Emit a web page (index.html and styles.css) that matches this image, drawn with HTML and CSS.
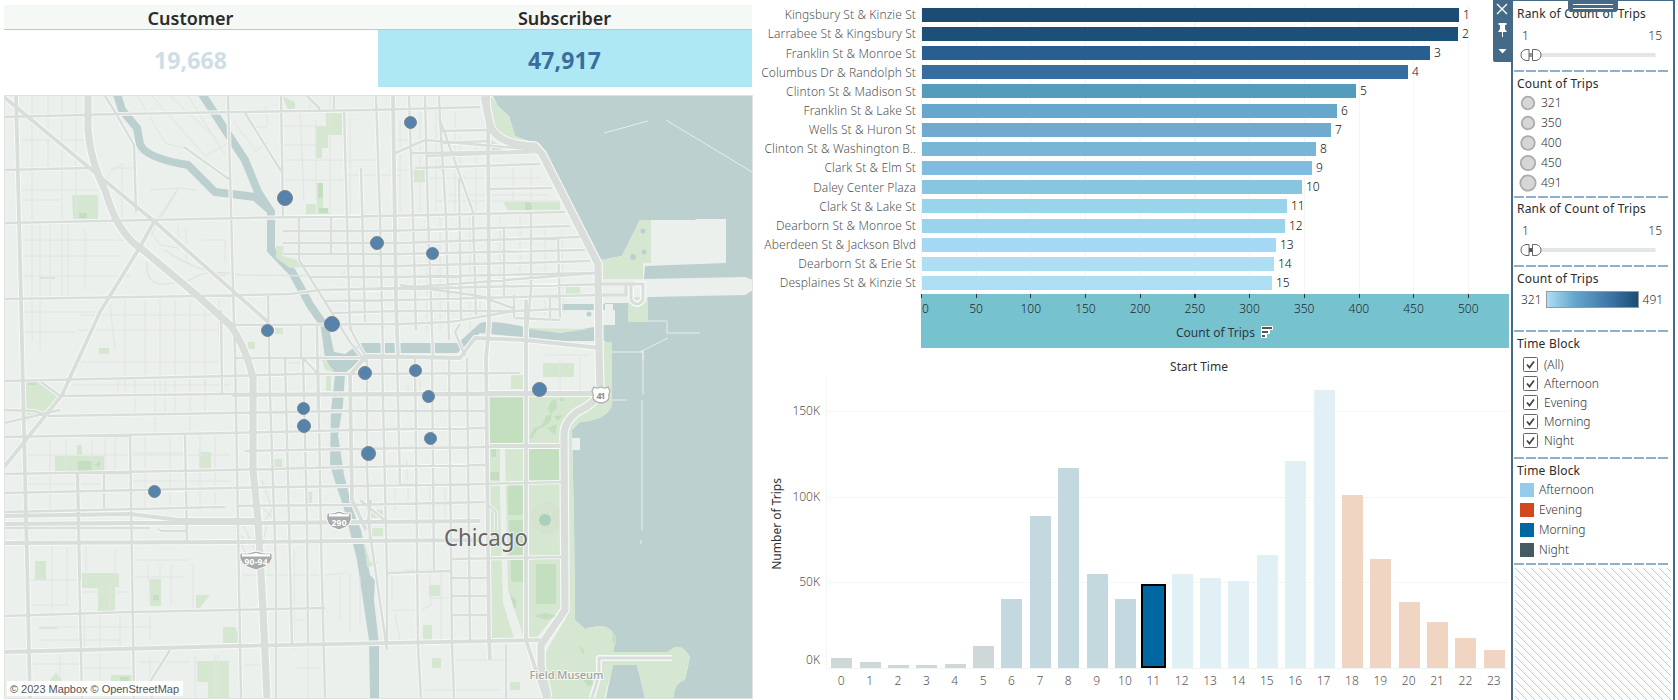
FILE: index.html
```html
<!DOCTYPE html>
<html lang="en">
<head>
<meta charset="utf-8">
<title>Bike trips dashboard</title>
<link rel="stylesheet" href="styles.css">
</head>
<body>
<main class="dashboard">
  <section class="left">
    <div class="kpis">
      <div class="kpi-head">Customer</div><div class="kpi-head">Subscriber</div>
      <div class="kpi muted">19,668</div><div class="kpi active">47,917</div>
    </div>
    <svg class="map" viewBox="4 95 749 604" width="749" height="604">
      <defs>
        <path id="minor" d="M32 96V340M48 96V168M62 96V300M76 96V210M40 225V350M50 225V300M68 225V296M85 230V290M22 140H86M22 190H100M22 200H60M22 240H130M22 256H120M22 276H130M22 312H100M22 332H76M100 190L112 170 122 164V218M110 168H134M150 190L178 188 196 190M178 188L150 230 160 245 178 248M178 226V250M186 228V262M202 240L225 240V262M138 96L165 143 190 150M152 96L205 156 228 143M170 96L218 140M188 96L225 155M250 114L267 108V127H256M233 121L256 151 268 142M284 126H316M300 110L304 200M316 120V200M284 160H345M284 180H345M330 96V216M310 96V112M350 118V216M284 145H318M345 160H378M345 175H400M110 305L115 350M125 300V395M145 298V375M160 298V395M175 298V375M190 300V395M205 300V395M219 300V340M80 315H219M78 330H219M76 362H220M72 385H230M118 376V396M135 377V414M155 376V434M165 377V414M175 376V414M190 377V434M205 378V412M50 440V510M66 440V470M92 440V470M105 438V510M115 438V470M145 437V510M170 436V512M200 435V512M215 434V510M24 455H230M24 484H100M132 453H185M132 481H230M52 545V610M67 548V605M86 546V585M115 550V575M136 560H188M148 565V580M160 565V575M171 565V605M132 577H185M193 563V608M29 580H78M30 605H70M82 592H130M110 580V612M132 625V650M40 627H150M38 640H120M84 615V648M100 615V648M120 615V648M150 610V640M28 664H80M82 668H130M30 682H120M140 662H190M60 655V690M100 654V690M150 658V695M195 655V698M215 655V698M218 655V698M242 575H320M294 550V650M308 640V698M245 665H264M296 620H306M296 668H320M250 355V380M288 363H300M255 395H268M325 575L345 573M340 575V620M350 573V632M360 575V625M392 570V600M405 570H418M392 610H415M395 614L400 640M430 570L431 605 422 610M441 570V640M430 598H450M450 660H510M425 690H500M395 485V510M408 485V505M430 485V520M445 485V520M407 460V480M400 120V212M420 110V212M436 108V212M455 112V212M440 142V170M460 137V212M476 145V212M462 130H486M462 152H488M412 178H540M450 195H548M435 201H560M513 165V201M531 165V205M500 215V280M520 215V280M545 225V275M562 230V300M395 140H412M390 170H420M408 385V395M420 380V392M560 358V390M545 355H590M580 358V390M563 300V312M545 300V315M480 300V315M440 215V330M427 215V330M470 218V330"/>
        <path id="roads" d="M4 117L120 114 370 110 480 107M4 170L88 168M4 223L245 218 380 216 565 212M4 299L200 296 290 294 320 290 440 288 612 284M234 325L400 324 450 322 515 311M4 381L230 376 300 374 350 374 520 373M60 396L230 394 485 393 600 392M48 416L230 413 350 411 485 411M4 437L230 433 350 430 485 428M245 451L350 449 485 447 560 445M4 474L230 470 350 467 485 465M4 493L230 488 350 486 485 484 561 482M4 512L225 507M238 506L350 505 485 502M4 528L150 528M158 529L162 531H187M4 551L4 543 480 540M450 559L561 557M4 616L130 612 235 610 325 608M387 573L450 571M452 578H488M452 596H488M453 615H488M60 410L4 423M4 410L35 411 45 415M40 381L60 396M235 358L350 358 460 357M283 231H380L570 226M283 243H400L580 237M283 254H400L585 250M300 266L400 266 590 261M310 277L400 277 595 273M318 290L400 288 598 273M325 301L400 300 602 295M332 313L400 311 515 311 560 309M415 168L540 164M412 153H427L540 151M393 154L425 140 540 150M440 131L488 130M443 143L488 141M490 189L552 188M427 156L540 152M105 96L115 112 134 145 136 212M228 96L234 325 235 350 241 698M281 96L283 216M245 113L281 171M184 147L230 180M307 96L320 109M334 96V109M344 109L350 330M376 96L380 216 383 358M409 96L413 216 416 330M425 96L428 216 433 358M439 96L440 120 446 216 449 340M440 120L473 212 476 315M459 178L461 320M361 168L365 322M299 218V260L350 342 366 362M331 218V254M351 324V330L366 358M504 228V296M531 214L531 290 525 350M558 238L560 318M268 295L270 395 276 570 276 698M221 310L222 394M301 326V358M317 326L318 410M303 358L318 374M285 358L289 520 292 645M303 358L307 520 308 645M318 358L321 540 325 698M367 358V470L370 540M382 358L387 573V645M397 358L400 485M415 358L418 645 421 698M432 358L434 570M449 358L452 645 454 698M467 358L470 640M77 474L82 698M130 434L134 698M185 433L187 540M104 474V508M78 474L80 580M360 500L387 522M152 698L148 685 170 650M506 645V698M400 285L480 296 515 309M460 324L455 332 465 356M514 295V318M515 318L560 320M550 298V318M371 500L368 520 387 650M488 505L496 512V530"/>
        <path id="wide" d="M16 96L21 300 27 560 30 698M4 97L104 180 155 222 268 322M155 220L140 247 100 312 78 360 62 395 4 467M393 96L396 300 398 358M488 96L489 325 486 358 489 640 490 660M488 393H600M232 395L600 394M4 516L130 514 180 520 258 520M4 524L130 523 260 523 480 521M4 543L240 542 480 540M4 652L235 646 540 640M350 375L352 500 366 530M526 300L526 640 545 698M350 375L366 356 460 358 475 338 525 340 600 348M490 446H560"/>
        <path id="express" d="M88 96L88 130Q90 160 106 193Q118 235 143 250L200 298 230 325Q245 345 253 378V470L258 520 263 610 267 698M484 96L490 125Q497 145 535 146L542 154 598 264 599 350 600 390Q598 402 577 412 564 422 564 435L565 610 541 645 541 665 548 698"/>
      </defs>
      <rect class="land" x="4" y="95" width="749" height="604"/>
      <path class="water" d="M493 96L498 106 509 116 515 136 531 142 541 148 600 260 622 256 640 220 695 220 696 219 726 219V263L645 266 644 279 745 277 753 280 753 290 745 295 648 297 648 322H628V303H605V342H612V405Q607 420 580 422L572 430 574 520 575 620 585 629Q612 620 616 640L613 652H668Q680 640 690 657L685 680Q675 682 673 698H753V96ZM613 665H637L645 698H606ZM562 304H613V310H562Z"/>
      <path class="river" d="M117 94L122 110 137 128 140 144Q145 158 188 165L215 192 255 197 270 210" stroke-width="8"/>
      <path class="river" d="M202 94L224 128 245 160 258 192 271 212V250L292 272 310 305 326 328" stroke-width="8"/>
      <path class="water" d="M321 328H329L334 352 345 354 361 343H458L480 323Q490 320 515 325L560 333 605 325V341L560 341 480 333 457 353H370L345 373 343 405 338 435 344 475 353 510 361 530 367 560 370 575 375 580 374 600 379 645V698H370L369 640 357 560 349 528 343 505 337 488 330 465 331 410 335 376 325 358Z"/>
      <g class="park">
        <path d="M72 195H98V219H73ZM326 113H342V135H328V148H322V158H316V126H326ZM282 96L295 102V109H288ZM412 170H425V182H412ZM491 96L498 106 509 116 515 136 540 147 510 145 493 128 487 110ZM491 140L505 148 492 151ZM503 202H560V210H508ZM600 260L622 256 640 220H651V263H643V279H602ZM628 297H648V322H628ZM566 287H580V294H566ZM306 214H316V204H306ZM276 246H284L282 256 298 260 300 267 290 268 276 258ZM317 183H323V212H329V214H317ZM25 382H40L59 396 45 412 26 421ZM55 456H104V471H55ZM77 445H82V455H77ZM199 452H211V469H199ZM35 561H46V580H35ZM82 573H119V587H115V612H98V588H82ZM149 579H161V606H150ZM196 595H210L200 608H196ZM223 627H235L238 632V643H223ZM197 661H229V698H208V682H197ZM111 675H132V690H111ZM50 680L56 672 62 680V690H50ZM273 459H282V467H273ZM306 492H312V503H306ZM320 354L335 372 325 370ZM326 376H331V391H326ZM364 541L370 562 379 561 374 566 367 567ZM371 510H383V518H371ZM372 528H383V536H372ZM489 397H524V640H490ZM529 397H598L570 425 562 440 562 606 535 640H529ZM600 342H612V405Q607 420 580 422L572 430 574 520 575 620 585 629Q612 620 616 640L613 652H668Q680 640 690 657L685 680Q675 682 673 698H645L637 665H613L604 698H551L544 655 566 618 566 430 575 418 600 398ZM543 363H574V377H543ZM511 375H523V389H511ZM429 585H440V596H429ZM423 625H432V640H423ZM432 658H441V668H432ZM510 682H520V690H510ZM520 328L590 329 560 333ZM39 627H57V629H39ZM39 277H55V279H39ZM99 348H109V354H99ZM248 342H255V349H248ZM275 328H283V334H275Z"/>
      </g>
      <g class="wood">
        <path d="M490 397H523V443H490ZM528 448H559V480H528ZM508 485H524V515H508ZM509 520H524V555H509ZM511 560H524V582H511ZM536 564H556V604H536ZM534 616L545 613 558 616 546 620ZM490 472H499V480H490ZM491 449H496V457H491ZM529 438L534 428 541 426 546 416 552 414 550 422 542 428 537 430 532 439ZM551 401L556 399 557 408 551 414 548 409ZM554 416L563 415 558 421ZM547 428L557 424 555 435ZM560 398H564V401H560ZM78 461H93V471H78ZM94 465L100 461V467ZM79 213H87V218H79ZM318 183H323V198H318ZM319 208H328V213H319ZM525 202H532V210H525ZM492 142L503 150H492ZM511 595L516 600V608H511ZM612 630L616 640 613 645ZM579 645L584 650 583 655ZM583 680L590 677 594 684 588 687ZM28 382H36V385H28ZM153 595H159V600H153ZM120 677H129V683H120Z"/>
      </g>
      <path class="land" d="M500 447H505L508 590 524 638H514L503 603 500 500ZM572 438H580V450H572ZM570 310H615V325H600L560 328Z"/>
      <g class="ponds"><circle cx="643" cy="231" r="2.5"/><circle cx="644" cy="252" r="2.5"/><circle cx="633" cy="257" r="3"/><circle cx="589" cy="314" r="2.5"/></g>
      <circle class="meadow" cx="547" cy="518" r="16"/><circle class="fountain" cx="545" cy="520" r="6"/>
      <path class="break" d="M604 133L648 121M666 120L752 172M648 321H667V333H700M643 350V360M640 352L668 338M612 352H643V395M642 400V530M612 400H627M641 540V544"/>
      <use href="#minor" class="minor"/>
      <path class="minor thick" d="M147 262Q145 285 165 284L190 280Q205 268 240 275L340 276 350 268M165 250Q190 268 225 276M178 189L150 235M236 510L260 560M250 495L275 520M275 505L250 545 235 530M262 480L275 518M238 535L252 570M268 520L262 545"/>
      <g class="casing"><use href="#roads" stroke-width="4.2"/><use href="#wide" stroke-width="5.8"/><use href="#express" stroke-width="9.5"/></g>
      <g class="fill"><use href="#roads" stroke-width="2.5"/><use href="#wide" stroke-width="3.8"/><use href="#express" stroke-width="7.2"/></g>
      <g class="casing"><path stroke-width="6" d="M592 698L599 675V658H672M635 284H643V300Q637 308 631 300V284"/></g>
      <g class="fill"><path stroke-width="3" d="M592 698L599 675V658H672M600 284H643V300Q637 308 631 300V284M600 295H626V284"/></g>
      <g class="shield">
        <path d="M327 513Q333 514 339 511 345 514 351 513 354 526 339 530 324 526 327 513Z"/><path class="crown" d="M329 514Q334 515 339 513 344 515 349 514V516.500H329Z"/>
        <text x="339" y="525.500" textLength="15">290</text>
        <path d="M240 553Q248 554 256 551 264 554 272 553 275 565 256 570 237 565 240 553Z"/><path class="crown" d="M242 554Q249 555 256 553 263 555 270 554V556.500H242Z"/>
        <text x="256" y="565" textLength="23">90-94</text>
        <path class="us" d="M594 387Q597 389 601 387 605 389 608 387L610 391Q608 395 609 398 608 402 601 403 594 402 593 398 594 395 592 391Z"/>
        <text class="us-text" x="601" y="398.500" textLength="9">41</text>
      </g>
      <text class="city" x="486" y="546" textLength="84" lengthAdjust="spacingAndGlyphs">Chicago</text>
      <text class="poi" x="566.5" y="678.5" textLength="74" lengthAdjust="spacingAndGlyphs">Field Museum</text>
      <g class="marks">
        <circle cx="285" cy="198" r="7.5"/><circle cx="377" cy="243" r="6.5"/><circle cx="410.5" cy="122.5" r="6"/><circle cx="432.5" cy="253.5" r="6"/><circle cx="267.5" cy="330.5" r="6"/><circle cx="332" cy="324" r="7.5"/><circle cx="365" cy="373" r="6.5"/><circle cx="303.5" cy="408.5" r="6"/><circle cx="304" cy="426" r="6.5"/><circle cx="368.5" cy="453.5" r="7"/><circle cx="154.5" cy="491.5" r="6"/><circle cx="415.5" cy="370.5" r="6"/><circle cx="428.5" cy="396.5" r="6"/><circle cx="539.5" cy="389.5" r="7"/><circle cx="430.5" cy="438.5" r="6"/>
      </g>
      <rect class="credit-bg" x="7" y="681" width="176" height="15"/>
      <text class="credit" x="10" y="693" textLength="169">© 2023 Mapbox © OpenStreetMap</text>
      <rect class="frame" x="4.5" y="95.5" width="748" height="603"/>
    </svg>
  </section>

  <section class="charts">
    <div class="stations">
      <div class="names">
        <div>Kingsbury St &amp; Kinzie St</div><div>Larrabee St &amp; Kingsbury St</div><div>Franklin St &amp; Monroe St</div><div>Columbus Dr &amp; Randolph St</div><div>Clinton St &amp; Madison St</div><div>Franklin St &amp; Lake St</div><div>Wells St &amp; Huron St</div><div>Clinton St &amp; Washington B..</div><div>Clark St &amp; Elm St</div><div>Daley Center Plaza</div><div>Clark St &amp; Lake St</div><div>Dearborn St &amp; Monroe St</div><div>Aberdeen St &amp; Jackson Blvd</div><div>Dearborn St &amp; Erie St</div><div>Desplaines St &amp; Kinzie St</div>
      </div>
      <div class="hbars">
        <div class="hrow"><i style="width:537px;background:#1c4c74"></i>1</div>
        <div class="hrow"><i style="width:536px;background:#1b5078"></i>2</div>
        <div class="hrow"><i style="width:508px;background:#285f90"></i>3</div>
        <div class="hrow"><i style="width:486px;background:#376e9f"></i>4</div>
        <div class="hrow"><i style="width:434px;background:#559bbc"></i>5</div>
        <div class="hrow"><i style="width:415px;background:#66a7cd"></i>6</div>
        <div class="hrow"><i style="width:409px;background:#70abcf"></i>7</div>
        <div class="hrow"><i style="width:394px;background:#78b6d7"></i>8</div>
        <div class="hrow"><i style="width:390px;background:#80bce0"></i>9</div>
        <div class="hrow"><i style="width:380px;background:#87c5e0"></i>10</div>
        <div class="hrow"><i style="width:365px;background:#9ad4ea"></i>11</div>
        <div class="hrow"><i style="width:363px;background:#9ad4ea"></i>12</div>
        <div class="hrow"><i style="width:354px;background:#a5d8f4"></i>13</div>
        <div class="hrow"><i style="width:352px;background:#addef4"></i>14</div>
        <div class="hrow"><i style="width:350px;background:#addef4"></i>15</div>
      </div>
      <div class="haxis">
        <div class="ticks"><span class="zero">0</span><span>50</span><span>100</span><span>150</span><span>200</span><span>250</span><span>300</span><span>350</span><span>400</span><span>450</span><span>500</span></div>
        <div class="axis-title"><span>Count of Trips</span>
          <svg width="14" height="13" viewBox="0 0 14 13"><path fill="#fff" d="M0 0H12V4H9V8H6V12H0Z"/><path fill="#555" d="M1 1H11V3H1ZM1 5H7V7H1ZM1 9H4V11H1Z"/></svg>
        </div>
      </div>
    </div>

    <div class="times">
      <div class="times-title">Start Time</div>
      <div class="ytitle"><span>Number of Trips</span></div>
      <div class="ylabels"><span>150K</span><span>100K</span><span>50K</span><span>0K</span></div>
      <div class="plot">
        <div class="col night"><i style="height:10px"></i></div><div class="col night"><i style="height:6px"></i></div><div class="col night"><i style="height:3px"></i></div><div class="col night"><i style="height:3px"></i></div><div class="col night"><i style="height:4px"></i></div><div class="col night"><i style="height:22px"></i></div>
        <div class="col morning"><i style="height:69px"></i></div><div class="col morning"><i style="height:152px"></i></div><div class="col morning"><i style="height:200px"></i></div><div class="col morning"><i style="height:94px"></i></div><div class="col morning"><i style="height:69px"></i></div><div class="col selected"><i style="height:84px"></i></div>
        <div class="col noon"><i style="height:94px"></i></div><div class="col noon"><i style="height:90px"></i></div><div class="col noon"><i style="height:87px"></i></div><div class="col noon"><i style="height:113px"></i></div><div class="col noon"><i style="height:207px"></i></div><div class="col noon"><i style="height:278px"></i></div>
        <div class="col evening"><i style="height:173px"></i></div><div class="col evening"><i style="height:109px"></i></div><div class="col evening"><i style="height:66px"></i></div><div class="col evening"><i style="height:46px"></i></div><div class="col evening"><i style="height:30px"></i></div><div class="col evening"><i style="height:18px"></i></div>
      </div>
      <div class="hours"><span>0</span><span>1</span><span>2</span><span>3</span><span>4</span><span>5</span><span>6</span><span>7</span><span>8</span><span>9</span><span>10</span><span>11</span><span>12</span><span>13</span><span>14</span><span>15</span><span>16</span><span>17</span><span>18</span><span>19</span><span>20</span><span>21</span><span>22</span><span>23</span></div>
    </div>
  </section>

  <aside class="panel">
    <svg class="toolbar" width="18" height="62" viewBox="0 0 18 62">
      <path fill="#446a87" d="M0 0H18V62H2Q0 62 0 60Z"/>
      <path fill="none" stroke="#fff" stroke-width="1.4" d="M4 4L14 14M14 4L4 14"/>
      <path fill="#fff" d="M5.500 23H13.500V25H12V29L14 32H10V37H9V32H5L7 29V25H5.500ZM5.500 49H13.500L9.500 53.500Z"/>
    </svg>
    <svg class="grip" width="50" height="12" viewBox="0 0 50 12"><path fill="#446a87" d="M0 0H50V10L48 12H2L0 10Z"/><path stroke="#fff" d="M5 4.500H45M5 8.500H45"/></svg>

    <section class="card rank">
      <h2>Rank of Count of Trips</h2>
      <div class="range"><span>1</span><span>15</span></div>
      <svg class="slider" width="136" height="12" viewBox="0 0 136 12"><path fill="#e2e6e5" d="M8 4H135.500V8H8Z"/><path fill="#999" d="M9 4H13V8H9Z"/><path fill="#fff" stroke="#666" d="M9 .5V11.500H6Q1 10.500 1 6T6 .5ZM12.500 .5V11.500H16Q21 10.500 21 6T16 .5Z"/></svg>
    </section>
    <section class="card sizes">
      <h2>Count of Trips</h2>
      <ul>
        <li><svg width="20" height="20"><circle cx="10" cy="10" r="6.300"/></svg>321</li>
        <li><svg width="20" height="20"><circle cx="10" cy="10" r="6.300"/></svg>350</li>
        <li><svg width="20" height="20"><circle cx="10" cy="10" r="6.800"/></svg>400</li>
        <li><svg width="20" height="20"><circle cx="10" cy="10" r="7.200"/></svg>450</li>
        <li><svg width="20" height="20"><circle cx="10" cy="10" r="7.700"/></svg>491</li>
      </ul>
    </section>
    <section class="card rank second">
      <h2>Rank of Count of Trips</h2>
      <div class="range"><span>1</span><span>15</span></div>
      <svg class="slider" width="136" height="12" viewBox="0 0 136 12"><path fill="#e2e6e5" d="M8 4H135.500V8H8Z"/><path fill="#555" d="M9 4H13V8H9Z"/><path fill="#fff" stroke="#666" d="M9 .5V11.500H6Q1 10.500 1 6T6 .5ZM12.500 .5V11.500H16Q21 10.500 21 6T16 .5Z"/></svg>
    </section>
    <section class="card ramp">
      <h2>Count of Trips</h2>
      <div class="ramp-row"><span>321</span><div class="gradient"></div><span>491</span></div>
    </section>
    <section class="card checks">
      <h2>Time Block</h2>
      <ul>
        <li><svg width="15" height="15"><rect x=".5" y=".5" width="14" height="14" rx="1"/><path d="M4 7.500L6.500 10.500 11 4.500"/></svg>(All)</li>
        <li><svg width="15" height="15"><rect x=".5" y=".5" width="14" height="14" rx="1"/><path d="M4 7.500L6.500 10.500 11 4.500"/></svg>Afternoon</li>
        <li><svg width="15" height="15"><rect x=".5" y=".5" width="14" height="14" rx="1"/><path d="M4 7.500L6.500 10.500 11 4.500"/></svg>Evening</li>
        <li><svg width="15" height="15"><rect x=".5" y=".5" width="14" height="14" rx="1"/><path d="M4 7.500L6.500 10.500 11 4.500"/></svg>Morning</li>
        <li><svg width="15" height="15"><rect x=".5" y=".5" width="14" height="14" rx="1"/><path d="M4 7.500L6.500 10.500 11 4.500"/></svg>Night</li>
      </ul>
    </section>
    <section class="card legend">
      <h2>Time Block</h2>
      <ul><li class="c1">Afternoon</li><li class="c2">Evening</li><li class="c3">Morning</li><li class="c4">Night</li></ul>
    </section>
    <svg class="hatch" width="156" height="133"><defs><pattern id="h" width="8" height="8" patternUnits="userSpaceOnUse"><path d="M0 0L8 8M-1 7L1 9M7 -1L9 1" stroke="#a6c0d6" stroke-width=".8"/></pattern></defs><rect width="156" height="133" fill="url(#h)"/></svg>
  </aside>
</main>
</body>
</html>
```
FILE: styles.css
```css
* { box-sizing: border-box; }
body {
  margin: 0;
  background: #fff;
  color: #555;
  font: 300 12px/16px "Noto Sans", "Open Sans", sans-serif;
  overflow: hidden;
}
h2, ul { margin: 0; padding: 0; list-style: none; }

.dashboard { display: flex; height: 700px; }
.left { width: 749px; margin-left: 4px; padding-top: 5px; }
.kpis {
  display: grid;
  grid-template-columns: 374px 374px;
  grid-template-rows: 25px 57px;
  height: 90px;
  text-align: center;
  font-weight: 600;
}
.kpi-head {
  background: #f5f9f6;
  border-bottom: 1px solid #c2c7c4;
  color: #2b2b2b;
  font-size: 18px;
  line-height: 26px;
}
.kpi { font-size: 23px; font-weight: 700; line-height: 61px; letter-spacing: .1px; }
.kpi-head, .kpi { padding-right: 1px; }
.muted { color: #cddee5; }
.active { background: #ade8f4; color: #3a6f9c; }

.map { display: block; font-family: "Noto Sans", sans-serif; font-weight: 400; }
.map text { text-anchor: middle; }
.land { fill: #ebf0ed; }
.water, .ponds { fill: #bcd0cf; }
.river { fill: none; stroke: #bcd0cf; }
.park { fill: #d5e7d1; }
.wood { fill: #c3dfbf; }
.meadow { fill: #d5e2cd; }
.fountain { fill: #aacfbd; }
.break { fill: none; stroke: #e8eeec; }
.minor { fill: none; stroke: #e2e4e2; }
.minor.thick { stroke-width: 1.5; }
.casing { fill: none; stroke: #f6f9f7; stroke-linejoin: round; }
.fill { fill: none; stroke: #dadedb; stroke-linejoin: round; }
.shield { fill: #a9abaa; stroke: #fff; }
.shield .crown { fill: #fff; stroke: none; }
.shield text { fill: #fff; stroke: none; font-size: 8.5px; font-weight: 700; }
.shield .us { fill: #fff; stroke: #b0b2b1; stroke-width: 1.3; }
.shield .us-text { fill: #8b8d8c; font-size: 9px; }
.city { fill: #666; font-size: 24px; stroke: #eef2ef; stroke-width: 2px; paint-order: stroke; }
.poi { fill: #a0a2a1; font-size: 11.500px; font-weight: 500; stroke: #f4f8f2; stroke-width: 2px; paint-order: stroke; }
.marks { fill: #5583ac; stroke: #7d858c; }
.credit-bg { fill: #fff; fill-opacity: .9; }
.map .credit { fill: #555; font: 11px "Liberation Sans", sans-serif; text-anchor: start; }
.frame { fill: none; stroke: #dfe3e1; }

.charts { width: 758px; }
.stations {
  display: grid;
  grid-template-columns: 168px 588px;
  grid-template-rows: 294px 54px;
}
.names { padding: 5.240px 5px 0 0; text-align: right; letter-spacing: .1px; }
.names div { height: 19.170px; line-height: 20px; white-space: nowrap; }
.hbars {
  padding: 5.240px 0 0 1px;
  background: repeating-linear-gradient(90deg, #f4f5f5 0 1px, transparent 1px 54.700px) 0 5px / 549px 289px no-repeat;
}
.hrow { display: flex; align-items: center; gap: 4px; height: 19.170px; color: #111; }
.hrow i { height: 14px; }
.haxis { grid-column: 2; background: #76c2ce; color: #222b2d; }
.ticks {
  display: flex;
  height: 30px;
  padding-top: 7px;
  margin-left: -27px;
  background: repeating-linear-gradient(90deg, #333 0 1px, transparent 1px 54.700px) 27px 0 / 549px 4px no-repeat;
}
.ticks span { width: 54.700px; text-align: center; }
.ticks .zero { padding-left: 8px; }
.axis-title { display: flex; gap: 6px; padding: 1px 0 0 255px; color: #2b3a3d; font-weight: 400; }
.axis-title svg { margin-top: 1px; }

.times {
  display: grid;
  grid-template-columns: 34px 39px 683px;
  grid-template-rows: 28px 293px 30px;
}
.times-title { grid-column: 1 / 4; padding: 11px 0 0 136px; text-align: center; color: #333; font-weight: 400; }
.ytitle { display: flex; align-items: center; justify-content: center; color: #333; font-weight: 400; }
.ytitle span { writing-mode: vertical-rl; transform: rotate(180deg); margin: 3px -14px 0 0; }
.ylabels { display: flex; flex-direction: column; align-items: flex-end; padding: 27px 6px 0 0; gap: 69.500px; color: #555; }
.ylabels span:last-child { margin-top: -8px; }
.plot {
  display: flex;
  padding-left: .5px;
  border-left: 1px solid #f4f6f6;
  border-bottom: 1px solid #f1f5f4;
  background: linear-gradient(#f5f6f6, #f5f6f6) 0 35px / 100% 1px no-repeat, linear-gradient(#f5f6f6, #f5f6f6) 0 121px / 100% 1px no-repeat, linear-gradient(#f5f6f6, #f5f6f6) 0 206px / 100% 1px no-repeat;
}
.col { display: flex; align-items: flex-end; justify-content: center; width: 28.390px; flex: none; }
.col i { width: 21px; }
.night i { background: #cfd8d8; }
.morning i { background: #c4d8e0; }
.noon i { background: #e1f0f5; }
.evening i { background: #f0d5c2; }
.selected i { width: 25px; background: #0068a0; border: 2px solid #000; }
.hours { grid-column: 3; display: flex; padding: 4px 0 0 1px; }
.hours span { width: 28.390px; flex: none; text-align: center; }

.panel {
  position: relative;
  width: 164px;
  border: 2px solid #446a87;
  border-top-width: 1px;
  border-bottom: 0;
  color: #333;
}
.toolbar { position: absolute; left: -20px; top: -1px; }
.grip { position: absolute; left: 55px; top: -1px; }
.card {
  margin: 0 5px 0 1px;
  padding: 4px 0 0 3px;
  background: repeating-linear-gradient(90deg, #8fb0cd 0 10px, transparent 10px 12px) 0 100% / 100% 2px no-repeat;
}
.card h2 { color: #2b2b2b; font: inherit; font-weight: 400; letter-spacing: .2px; }
.card svg { display: block; flex: none; }
.rank { height: 71px; padding-top: 5px; }
.rank.second { height: 69px; padding-top: 3px; }
.range { display: flex; justify-content: space-between; padding: 6px 6px 0 5px; }
.rank .slider { margin: 5px 0 0 3px; }
.sizes { height: 126px; }
.sizes ul { padding-top: 1px; }
.sizes li { display: flex; align-items: center; gap: 3px; height: 20px; margin-left: 1px; }
.sizes circle { fill: #d6d6d6; stroke: #acacac; stroke-width: 1.800px; }
.ramp { height: 65px; }
.ramp-row { display: flex; align-items: center; gap: 4px; padding: 4px 0 0 4px; }
.gradient { width: 93px; height: 17px; border: 1px solid #999; background: linear-gradient(90deg, #addef4, #66a7cd 30%, #376e9f 75%, #1c4c74); }
.checks { height: 127px; }
.checks ul { padding-top: 3px; }
.checks li { display: flex; align-items: center; gap: 6px; height: 19px; margin-left: 6px; }
.checks rect { fill: #fff; stroke: #666; }
.checks path { fill: none; stroke: #444; stroke-width: 1.800px; }
.legend { height: 106px; }
.legend ul { padding-top: 1px; }
.legend li { display: flex; align-items: center; gap: 5px; height: 20px; margin-left: 3px; }
.legend li::before { content: ""; width: 14px; height: 14px; background: var(--c); }
.c1 { --c: #93cbe9; }
.c2 { --c: #d2481c; }
.c3 { --c: #0068a0; }
.c4 { --c: #465a61; }
.hatch { display: block; margin: 3px 0 0 2px; }
```
